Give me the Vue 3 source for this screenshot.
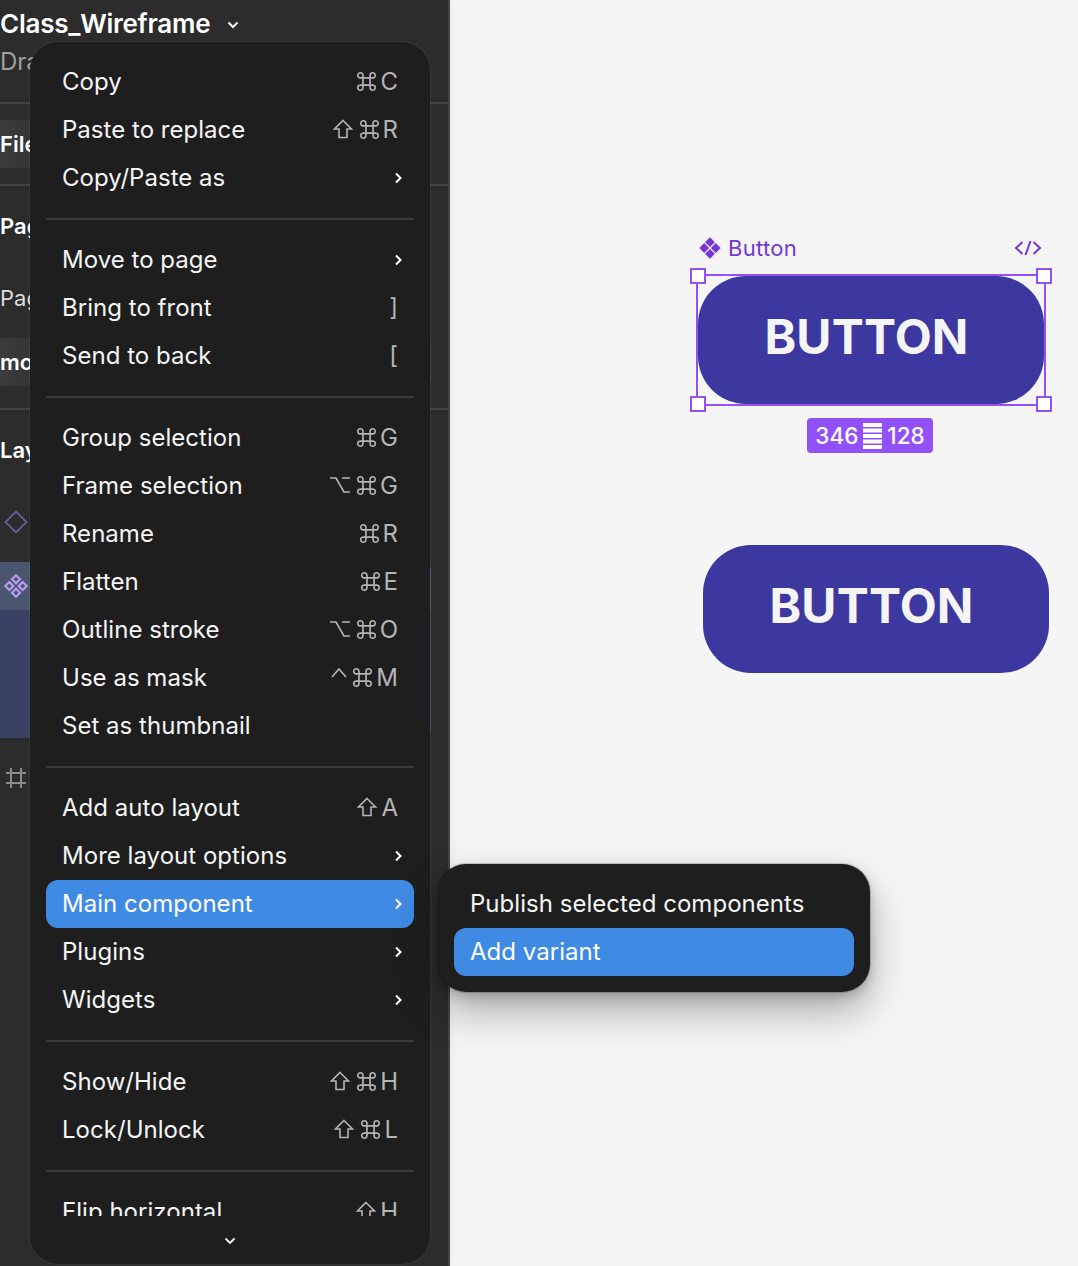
<script setup>
const groups = [
  [
    { label: 'Copy', keys: ['cmd', 'C'] },
    { label: 'Paste to replace', keys: ['shift', 'cmd', 'R'] },
    { label: 'Copy/Paste as', sub: true },
  ],
  [
    { label: 'Move to page', sub: true },
    { label: 'Bring to front', keys: [']'] },
    { label: 'Send to back', keys: ['['] },
  ],
  [
    { label: 'Group selection', keys: ['cmd', 'G'] },
    { label: 'Frame selection', keys: ['opt', 'cmd', 'G'] },
    { label: 'Rename', keys: ['cmd', 'R'] },
    { label: 'Flatten', keys: ['cmd', 'E'] },
    { label: 'Outline stroke', keys: ['opt', 'cmd', 'O'] },
    { label: 'Use as mask', keys: ['ctrl', 'cmd', 'M'] },
    { label: 'Set as thumbnail' },
  ],
  [
    { label: 'Add auto layout', keys: ['shift', 'A'] },
    { label: 'More layout options', sub: true },
    { label: 'Main component', sub: true, active: true },
    { label: 'Plugins', sub: true },
    { label: 'Widgets', sub: true },
  ],
  [
    { label: 'Show/Hide', keys: ['shift', 'cmd', 'H'] },
    { label: 'Lock/Unlock', keys: ['shift', 'cmd', 'L'] },
  ],
  [{ label: 'Flip horizontal', keys: ['shift', 'H'] }],
]
</script>

<template>
  <div class="stage">
    <aside class="side">
      <div class="title-row"><span class="title">Class_Wireframe</span>
        <svg class="caret" width="12" height="8" viewBox="0 0 12 8"><path d="M1.500 1.500 6 6l4.500-4.500" fill="none" stroke="#fff" stroke-width="2"/></svg>
      </div>
      <div class="draft">Drafts</div>
      <hr class="rule r1" />
      <div class="tab">File</div>
      <hr class="rule r2" />
      <div class="sec-a">Pages</div>
      <div class="sec-b">Page 1</div>
      <div class="page-row">mod</div>
      <hr class="rule r3" />
      <div class="sec-c">Layers</div>
      <div class="lay-icon first">
        <svg width="26" height="26" viewBox="0 0 26 26"><path d="M13 2.500 23.500 13 13 23.500 2.500 13Z" fill="none" stroke="#6e5a94" stroke-width="1.800"/></svg>
      </div>
      <div class="lay-sel">
        <svg width="26" height="26" viewBox="0 0 26 26" fill="none" stroke="#b79cf0" stroke-width="2.200">
          <path d="M13 2.300 17 6.300 13 10.300 9 6.300Z"/><path d="M19.700 9 23.700 13 19.700 17 15.700 13Z"/><path d="M6.300 9 10.300 13 6.300 17 2.300 13Z"/><path d="M13 15.700 17 19.700 13 23.700 9 19.700Z"/>
        </svg>
      </div>
      <div class="lay-child"></div>
      <div class="lay-icon frame">
        <svg width="22" height="22" viewBox="0 0 22 22" fill="none" stroke="#8a8a8a" stroke-width="2"><path d="M6 1V21M16 1V21M1 6H21M1 16H21"/></svg>
      </div>
    </aside>

    <main class="canvas">
      <div class="comp-label"><svg width="22" height="22" viewBox="0 0 22 22" fill="#7436d6"><path d="M11 .3 15.900 5.200 11 10.100 6.100 5.200ZM16.800 6.100 21.700 11 16.800 15.900 11.900 11ZM5.200 6.100 10.100 11 5.200 15.900 .3 11ZM11 11.900 15.900 16.800 11 21.700 6.100 16.800Z"/></svg><span>Button</span></div>
      <svg class="code" width="28" height="16" viewBox="0 0 28 16" fill="none" stroke="#7436d6" stroke-width="2"><path d="M8.500 2 2 8l6.500 6M19.500 2 26 8l-6.500 6M16.500 1 11.500 15"/></svg>
      <div class="btn selected-btn">BUTTON</div>
      <div class="sel-box">
        <i class="h tl"></i><i class="h tr"></i><i class="h bl"></i><i class="h br"></i>
      </div>
      <div class="dims"><span>346</span>
        <svg width="19" height="26" viewBox="0 0 19 26" fill="#fff"><path d="M0 0h19v4H0zM0 5.500h19v4H0zM0 11h19v4H0zM0 16.500h19v4H0zM0 22h19v4H0z"/></svg>
        <span>128</span></div>
      <div class="btn plain-btn">BUTTON</div>
    </main>

    <div class="menu">
      <div class="menu-scroll">
        <template v-for="(g, i) in groups" :key="i">
          <hr v-if="i" class="sep" />
          <div v-for="it in g" :key="it.label" class="item" :class="{ active: it.active }">
            <span>{{ it.label }}</span>
            <span v-if="it.keys" class="keys">
              <template v-for="k in it.keys" :key="k">
                <svg v-if="k === 'cmd'" class="k" width="19" height="19" viewBox="1 1 16 16" fill="none" stroke="currentColor" stroke-width="1.400"><path d="M6 6h6v6H6zM6 6H4a2.200 2.200 0 1 1 2-2zM12 6V4a2.200 2.200 0 1 1 2 2zM12 12h2a2.200 2.200 0 1 1-2 2zM6 12v2a2.200 2.200 0 1 1-2-2z"/></svg>
                <svg v-else-if="k === 'shift'" class="k shift" width="20" height="20" viewBox="0 0 20 20" fill="none" stroke="currentColor" stroke-width="1.600"><path d="M10 1.500 18.500 10H14v8.500H6V10H1.500Z"/></svg>
                <svg v-else-if="k === 'opt'" class="k opt" width="22" height="18" viewBox="0 0 22 18" fill="none" stroke="currentColor" stroke-width="1.700"><path d="M1 2h6l8 14h6M13 2h8"/></svg>
                <svg v-else-if="k === 'ctrl'" class="k ctrl" width="16" height="18" viewBox="0 0 16 18" fill="none" stroke="currentColor" stroke-width="1.700"><path d="M1 9 8 1l7 8"/></svg>
                <span v-else>{{ k }}</span>
              </template>
            </span>
            <svg v-if="it.sub" class="chev" width="10" height="12" viewBox="0 0 10 12"><path d="M2 1.500 6.500 6 2 10.500" fill="none" stroke="#fff" stroke-width="2"/></svg>
          </div>
        </template>
      </div>
      <div class="more">
        <svg width="12" height="8" viewBox="0 0 12 8"><path d="M1.500 1.500 6 6l4.500-4.500" fill="none" stroke="#fff" stroke-width="1.800"/></svg>
      </div>
    </div>

    <div class="submenu">
      <div class="item">Publish selected components</div>
      <div class="item active">Add variant</div>
    </div>
  </div>
</template>

<style>
html, body { margin: 0; background: #f5f5f5; }
</style>

<style scoped>
.stage {
  position: relative;
  width: 1078px;
  height: 1266px;
  overflow: hidden;
  display: flex;
  font-family: Inter, "Liberation Sans", sans-serif;
  color: #fff;
}
.side {
  position: relative;
  z-index: 1;
  width: 450px;
  height: 1266px;
  flex: none;
  background: #2c2c2c;
  border-right: 2px solid #444;
  box-shadow: 1px 0 10px rgba(0,0,0,.05);
  box-sizing: border-box;
  display: flex;
  flex-direction: column;
}
.title-row { height: 47px; display: flex; align-items: center; gap: 17px; }
.title { font-size: 26px; font-weight: 600; letter-spacing: -0.25px; }
.caret { margin-top: 2px; }
.draft { font-size: 24px; color: #a0a0a0; height: 30px; line-height: 30px; }
.rule { border: 0; height: 2px; background: #444; margin: 0; flex: none; }
.r1 { margin-top: 25px; }
.tab { margin-top: 16px; height: 48px; line-height: 48px; width: 400px; background: linear-gradient(90deg, #3c3c3c, #343434 30px); font-size: 22px; font-weight: 600; }
.r2 { margin-top: 16px; }
.sec-a { margin-top: 26px; font-size: 22px; font-weight: 600; line-height: 28px; }
.sec-b { margin-top: 44px; font-size: 22px; line-height: 28px; color: #ddd; }
.page-row { margin-top: 26px; height: 48px; line-height: 48px; width: 432px; border-radius: 0 8px 8px 0; background: linear-gradient(90deg, #3c3c3c, #343434 30px); font-size: 22px; font-weight: 600; }
.r3 { margin-top: 22px; }
.sec-c { margin-top: 26px; font-size: 22px; font-weight: 600; line-height: 28px; }
.lay-icon { display: flex; align-items: center; }
.first { margin-top: 34px; height: 48px; padding-left: 3px; }
.lay-sel { margin-top: 16px; height: 48px; width: 431px; display: flex; align-items: center; padding-left: 3px; box-sizing: border-box; background: #4a556f; border-top-right-radius: 8px; }
.lay-child { height: 128px; width: 431px; background: #394263; border-bottom-right-radius: 8px; }
.frame { margin-top: 28px; height: 24px; padding-left: 5px; }

.canvas { position: relative; flex: 1; background: #f5f5f5; }
.comp-label { position: absolute; left: 249px; top: 236px; display: flex; align-items: center; gap: 7px; color: #7436d6; font-size: 22px; line-height: 24px; letter-spacing: 0.3px; }
.code { position: absolute; left: 564px; top: 240px; }
.btn {
  position: absolute;
  width: 346px;
  height: 128px;
  box-sizing: border-box;
  padding-right: 9px;
  border-radius: 48px;
  background: #3d389f;
  color: #f5f5f5;
  font-weight: 700;
  font-size: 48px;
  letter-spacing: 0.2px;
  line-height: 122px;
  text-align: center;
}
.selected-btn { left: 248px; top: 276px; }
.plain-btn { left: 253px; top: 545px; }
.sel-box { position: absolute; left: 246px; top: 274px; width: 346px; height: 128px; border: 2px solid #9250f9; }
.h { position: absolute; width: 12px; height: 12px; background: #fff; border: 2px solid #9250f9; }
.tl { left: -8px; top: -8px; }
.tr { right: -8px; top: -8px; }
.bl { left: -8px; bottom: -8px; }
.br { right: -8px; bottom: -8px; }
.dims { position: absolute; left: 357px; top: 418px; width: 126px; height: 35px; box-sizing: border-box; border-radius: 4px; background: #9250f9; display: flex; align-items: center; justify-content: center; gap: 5px; color: #fff; font-size: 22.500px; font-weight: 500; }

.menu {
  position: absolute;
  z-index: 2;
  left: 30px;
  top: 42px;
  width: 400px;
  height: 1222px;
  box-sizing: border-box;
  background: #1e1e1e;
  border-radius: 28px;
  box-shadow: 0 0 0 1px rgba(255,255,255,.05);
  overflow: hidden;
}
.menu-scroll { height: 1174px; overflow: hidden; padding: 16px 16px 0; box-sizing: border-box; }
.more { height: 48px; display: flex; align-items: center; justify-content: center; padding-top: 2px; box-sizing: border-box; }
.sep { border: 0; height: 2px; margin: 16px 0; background: #3a3a3a; }
.item {
  height: 48px;
  display: flex;
  align-items: center;
  justify-content: space-between;
  padding: 0 16px 2px;
  box-sizing: border-box;
  border-radius: 12px;
  font-size: 24px;
  letter-spacing: 0.03px;
  color: #f5f5f5;
}
.item.active { background: #3f8ae2; color: #fff; }
.keys { display: flex; align-items: center; gap: 4px; color: #b5b5b5; letter-spacing: 0; }
.k { flex: none; overflow: visible; }
.shift { margin-right: 3px; }
.shift + span { margin-left: -3px; }
.opt, .ctrl { margin-right: 2px; }
.chev { margin-right: -6px; margin-top: 2px; }

.submenu {
  position: absolute;
  z-index: 3;
  left: 438px;
  top: 864px;
  width: 432px;
  height: 128px;
  padding: 16px;
  box-sizing: border-box;
  background: #1e1e1e;
  border-radius: 28px;
  box-shadow: 0 0 0 1px rgba(0,0,0,.15), 0 4px 12px rgba(0,0,0,.2), 0 20px 40px rgba(0,0,0,.3);
}
</style>
